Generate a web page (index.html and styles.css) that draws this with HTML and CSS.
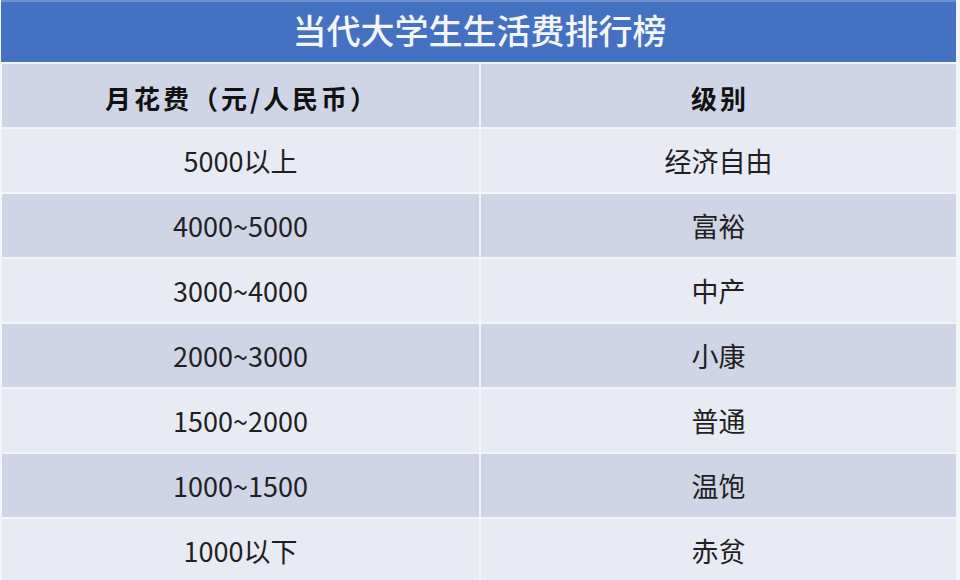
FILE: index.html
```html
<!DOCTYPE html>
<html lang="zh-CN">
<head>
<meta charset="utf-8">
<title>当代大学生生活费排行榜</title>
<link rel="stylesheet" href="styles.css">
</head>
<body>
<div class="page">
  <div class="title">当代大学生生活费排行榜</div>
  <div class="table">
    <div class="cell head">月花费（元/人民币）</div>
    <div class="cell head">级别</div>
    <div class="cell odd">5000以上</div>
    <div class="cell odd">经济自由</div>
    <div class="cell even">4000~5000</div>
    <div class="cell even">富裕</div>
    <div class="cell odd">3000~4000</div>
    <div class="cell odd">中产</div>
    <div class="cell even">2000~3000</div>
    <div class="cell even">小康</div>
    <div class="cell odd">1500~2000</div>
    <div class="cell odd">普通</div>
    <div class="cell even">1000~1500</div>
    <div class="cell even">温饱</div>
    <div class="cell odd">1000以下</div>
    <div class="cell odd">赤贫</div>
  </div>
</div>
</body>
</html>
```

FILE: styles.css
```css
html, body {
  margin: 0;
  padding: 0;
  background: #f4f5f9;
}
body {
  width: 960px;
  height: 580px;
  overflow: hidden;
  font-family: "Noto Sans CJK SC", "Noto Sans", sans-serif;
}
.page {
  display: flex;
  flex-direction: column;
  gap: 2px;
  padding: 0 4px 0 1px;
}
.title {
  height: 62px;
  background: #4471c1;
  border-top: 2px solid #6f8fcf;
  box-sizing: border-box;
  color: #f4f6fb;
  font-size: 34px;
  font-weight: 500;
  display: flex;
  align-items: center;
  justify-content: center;
  padding-left: 2px;
  padding-bottom: 6px;
}
.table {
  display: grid;
  grid-template-columns: 477px 475px;
  grid-auto-rows: 63px;
  gap: 2px 2px;
  margin-left: 1px;
}
.cell {
  display: flex;
  align-items: center;
  justify-content: center;
  font-size: 27px;
  color: #1f1f24;
}
.head {
  background: #cfd5e7;
  font-weight: 700;
  font-size: 26px;
  letter-spacing: 3px;
  color: #111;
  padding-top: 3px;
  padding-left: 3px;
}
.odd {
  background: #e9ebf4;
}
.even {
  background: #cfd5e7;
}
```
